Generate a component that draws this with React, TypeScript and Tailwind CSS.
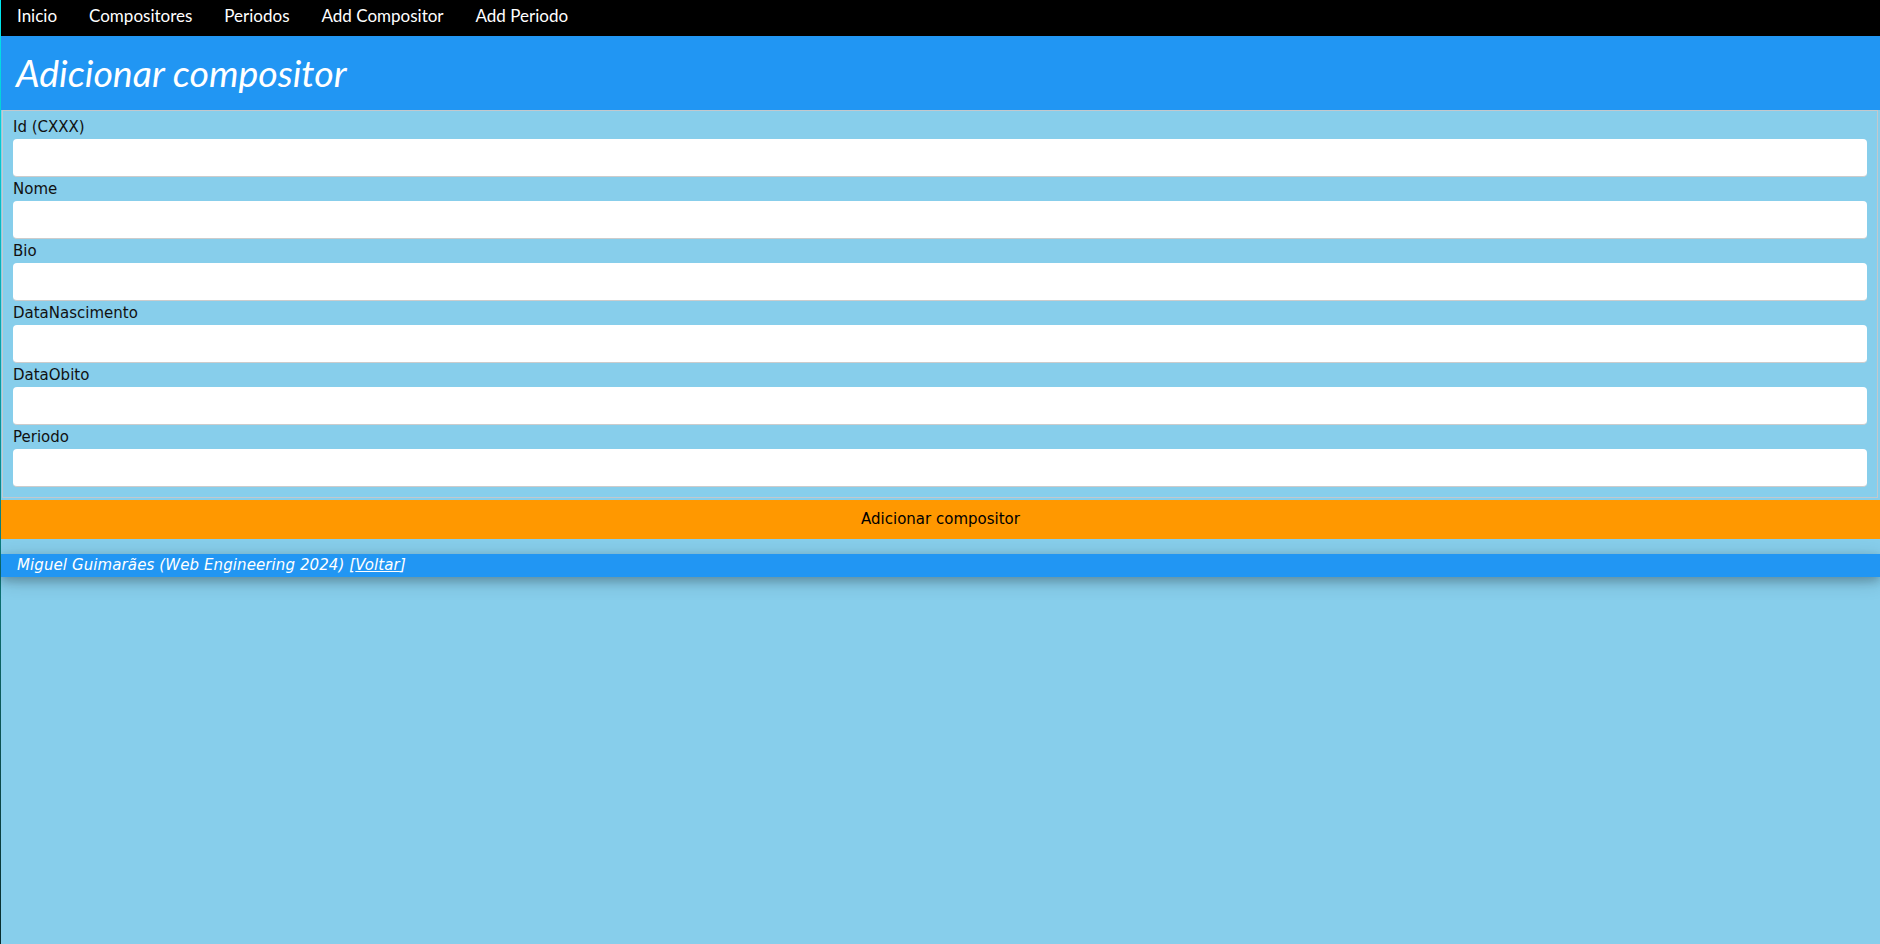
import React from 'react';

const navItems = ['Inicio', 'Compositores', 'Periodos', 'Add Compositor', 'Add Periodo'];

const fields = ['Id (CXXX)', 'Nome', 'Bio', 'DataNascimento', 'DataObito', 'Periodo'];

const App: React.FC = () => {
  return (
    <div className="flex min-h-[944px] bg-[#87ceeb]">
      {/* window edge */}
      <div className="w-px shrink-0 bg-gradient-to-b from-[#00e8f0] via-[#0a8a8a] to-[#082c2c]" />

      <div className="flex min-w-0 flex-1 flex-col font-['DejaVu_Sans',Verdana,sans-serif] text-[15px]">
        {/* Top bar */}
        <nav className="flex h-9 items-center bg-black pb-1 font-['Lato',sans-serif] text-[17px] text-white">
          {navItems.map((item) => (
            <a key={item} href="#" className="px-4 leading-8">
              {item}
            </a>
          ))}
        </nav>

        {/* Header */}
        <header className="flex h-[74px] items-center bg-[#2196f3] pl-[15px] text-white">
          <h1 className="font-['Lato',sans-serif] text-[37.5px] italic font-normal">
            Adicionar compositor
          </h1>
        </header>

        <form className="flex flex-col">
          <fieldset className="ml-px mr-[2px] border border-t border-[#c4c8cc] px-[10px] pb-[10px] pt-[4px]">
            {fields.map((label) => (
              <div key={label}>
                <label className="block h-6 leading-6 text-[#111]">{label}</label>
                <input
                  type="text"
                  className="block h-[38px] w-full rounded-[4px] border-b border-[#cccccc] bg-white px-2 outline-none"
                />
              </div>
            ))}
          </fieldset>

          <button
            type="button"
            className="mt-[2px] h-[39px] w-full bg-[#ff9800] text-[15px] text-black"
          >
            Adicionar compositor
          </button>
        </form>

        {/* Footer */}
        <footer className="mt-[15px] bg-[#2196f3] pl-4 leading-[23px] tracking-[0.1px] text-white italic shadow-[0_4px_10px_0_rgba(0,0,0,0.2),0_4px_20px_0_rgba(0,0,0,0.19)]">
          Miguel Guimarães (Web Engineering 2024) [<a href="#" className="underline">Voltar</a>]
        </footer>
      </div>
    </div>
  );
};

export default App;
